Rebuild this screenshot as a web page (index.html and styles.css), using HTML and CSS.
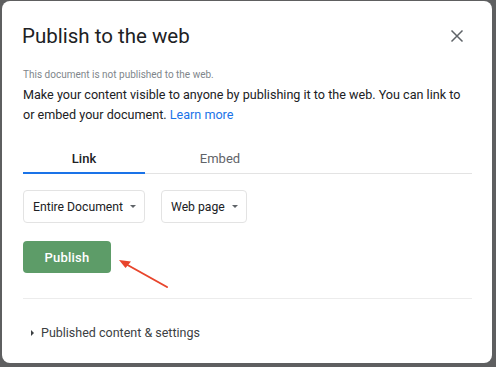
FILE: index.html
```html
<!DOCTYPE html>
<html>
<head>
<meta charset="utf-8">
<link rel="stylesheet" href="styles.css">
</head>
<body>
<div class="dialog">
  <div class="header">
    <h1 class="title">Publish to the web</h1>
    <svg class="close" width="14" height="14" viewBox="0 0 14 14"><path d="M1.5 1.5L12.5 12.5M12.5 1.5L1.5 12.5" stroke="#5f6368" stroke-width="1.5" fill="none"/></svg>
  </div>
  <p class="status">This document is not published to the web.</p>
  <p class="desc">Make your content visible to anyone by publishing it to the web. You can link to or embed your document. <a class="link" href="#">Learn more</a></p>
  <div class="tabs">
    <div class="tab active">Link</div>
    <div class="tab">Embed</div>
  </div>
  <div class="selects">
    <div class="select">Entire Document <span class="caret"></span></div>
    <div class="select">Web page <span class="caret"></span></div>
  </div>
  <div class="actions">
    <button class="publish">Publish</button>
    <svg class="arrow" width="60" height="40" viewBox="0 0 60 40"><path d="M52 33L9 9" stroke="#e8452c" stroke-width="2" fill="none" stroke-linecap="round"/><path d="M4 6L16 7.5L10.5 14Z" fill="#e8452c"/></svg>
  </div>
  <div class="divider"></div>
  <div class="expander"><span class="tri"></span>Published content &amp; settings</div>
</div>
</body>
</html>
```
FILE: styles.css
```css
html, body {
  margin: 0;
  padding: 0;
}
body {
  background: #5e5f60;
  width: 496px;
  height: 367px;
  overflow: hidden;
  font-family: Roboto, "Liberation Sans", Arial, sans-serif;
  color: #202124;
}
.dialog {
  position: relative;
  box-sizing: border-box;
  margin: 1px 0 0 2px;
  width: 490px;
  height: 362px;
  background: #fff;
  border-radius: 8px;
  padding: 19px 20px 0 20px;
}
.header {
  display: flex;
  justify-content: space-between;
  align-items: center;
}
.title {
  margin: 0;
  font-size: 20.5px;
  font-weight: 400;
  line-height: 32px;
  color: #202124;
}
.close {
  margin-right: 8px;
}
.status {
  margin: 16px 0 0 1px;
  font-size: 10px;
  line-height: 14px;
  color: #80868b;
}
.desc {
  margin: 3px 0 0 1px;
  font-size: 12.6px;
  line-height: 20px;
  color: #202124;
}
.link {
  color: #1a73e8;
  text-decoration: none;
}
.tabs {
  display: flex;
  margin: 24px 0 0 1px;
  border-bottom: 1px solid #e3e3e3;
}
.tab {
  width: 122px;
  text-align: center;
  font-size: 13px;
  line-height: 20px;
  padding-bottom: 3px;
  color: #5f6368;
  margin-right: 14px;
}
.tab.active {
  color: #202124;
  font-weight: 500;
  border-bottom: 2px solid #1a73e8;
  margin-bottom: -1px;
}
.selects {
  display: flex;
  gap: 16px;
  margin: 16px 0 0 1px;
}
.select {
  box-sizing: border-box;
  height: 33px;
  display: flex;
  align-items: center;
  gap: 7px;
  padding: 0 8px 0 9px;
  border: 1px solid #e3e3e3;
  border-radius: 4px;
  font-size: 12.2px;
  color: #202124;
}
.caret {
  width: 0;
  height: 0;
  border-left: 3.5px solid transparent;
  border-right: 3.5px solid transparent;
  border-top: 3.5px solid #5f6368;
}
.actions {
  position: relative;
  margin: 18px 0 0 1px;
  height: 32px;
}
.publish {
  display: block;
  width: 88px;
  height: 32px;
  border: none;
  border-radius: 4px;
  background: #5d9c68;
  color: #fff;
  font-family: Roboto, "Liberation Sans", Arial, sans-serif;
  font-size: 13px;
  font-weight: 500;
  letter-spacing: 0.2px;
}
.arrow {
  position: absolute;
  left: 92px;
  top: 13px;
}
.divider {
  margin: 25px 0 0 1px;
  border-top: 1px solid #ececec;
}
.expander {
  display: flex;
  align-items: center;
  margin: 24px 0 0 9px;
  font-size: 12.5px;
  line-height: 20px;
  color: #3c4043;
}
.tri {
  width: 0;
  height: 0;
  border-top: 3.5px solid transparent;
  border-bottom: 3.5px solid transparent;
  border-left: 3.5px solid #3c4043;
  margin-right: 7px;
}
```
